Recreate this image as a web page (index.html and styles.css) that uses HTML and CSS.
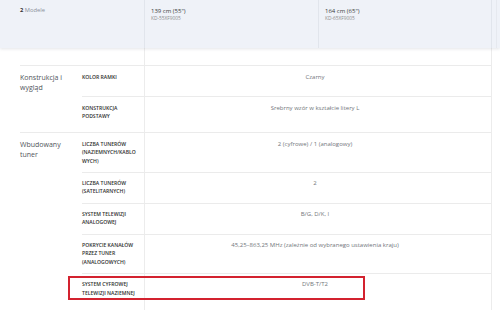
FILE: index.html
```html
<!DOCTYPE html>
<html lang="pl">
<head>
<meta charset="utf-8">
<title>Porównanie modeli</title>
<link rel="stylesheet" href="styles.css">
</head>
<body>
<div class="page">
  <header class="head">
    <div class="hcell first"><span class="count">2</span> Modele</div>
    <div class="hcell">
      <div class="size">139 cm (55")</div>
      <div class="model">KD-55XF9005</div>
    </div>
    <div class="hcell">
      <div class="size">164 cm (65")</div>
      <div class="model">KD-65XF9005</div>
    </div>
    <div class="hcell edge"></div>
  </header>

  <main class="specs">
    <section class="group">
      <div class="sec-title">Konstrukcja i wygląd</div>
      <div class="rows">
        <div class="row">
          <div class="label">KOLOR RAMKI</div>
          <div class="value">Czarny</div>
        </div>
        <div class="row">
          <div class="label">KONSTRUKCJA PODSTAWY</div>
          <div class="value">Srebrny wzór w kształcie litery L</div>
        </div>
      </div>
    </section>

    <section class="group">
      <div class="sec-title">Wbudowany tuner</div>
      <div class="rows">
        <div class="row">
          <div class="label">LICZBA TUNERÓW (NAZIEMNYCH/&#8288;KABLO<wbr>WYCH)</div>
          <div class="value">2 (cyfrowe) / 1 (analogowy)</div>
        </div>
        <div class="row">
          <div class="label">LICZBA TUNERÓW (SATELITARNYCH)</div>
          <div class="value">2</div>
        </div>
        <div class="row">
          <div class="label">SYSTEM TELEWIZJI ANALOGOWEJ</div>
          <div class="value">B/G, D/K, I</div>
        </div>
        <div class="row">
          <div class="label">POKRYCIE KANAŁÓW PRZEZ TUNER (ANALOGOWYCH)</div>
          <div class="value">45,25–863,25 MHz (zależnie od wybranego ustawienia kraju)</div>
        </div>
        <div class="row">
          <div class="label">SYSTEM CYFROWEJ TELEWIZJI NAZIEMNEJ</div>
          <div class="value">DVB-T/T2</div>
        </div>
      </div>
    </section>
  </main>

  <div class="highlight"></div>
</div>
</body>
</html>
```

FILE: styles.css
```css
html, body {
  margin: 0;
  padding: 0;
  background: #ffffff;
}

body {
  font-family: "Open Sans", "Noto Sans", sans-serif;
  width: 500px;
  height: 310px;
  overflow: hidden;
}

.page {
  position: relative;
  width: 500px;
  height: 310px;
  overflow: hidden;
}

/* ---------- header ---------- */
.head {
  display: grid;
  grid-template-columns: 145px 174px 173px 1fr;
  height: 48px;
  background: #eff2f8;
  box-shadow: 0 1px 3px rgba(60, 70, 90, 0.14);
  position: relative;
  z-index: 1;
}

.hcell {
  border-right: 1px solid #e1e5ec;
  padding: 7px 0 0 6px;
}

.hcell.first {
  padding: 6px 0 0 20px;
  font-size: 5.8px;
  line-height: 8px;
  color: #8a8f99;
}

.hcell.edge {
  padding: 0;
  border-right: 1px solid #e6e9ef;
  margin-right: 3px;
}

.count {
  color: #333;
  font-weight: 700;
}

.size {
  font-size: 6px;
  line-height: 8px;
  color: #3a3a3a;
}

.model {
  font-size: 4.8px;
  line-height: 7px;
  color: #8c8c8c;
}

/* ---------- spec table ---------- */
.specs {
  box-sizing: border-box;
  width: 492px;
  height: 262px;
  padding: 17px 0 0 20px;
  border-right: 1px solid #ececec;
  background: linear-gradient(#ececec, #ececec) no-repeat 144px 0 / 1px 100%;
}

.group {
  display: flex;
  border-top: 1px solid #ebebeb;
}

.sec-title {
  box-sizing: border-box;
  width: 62px;
  flex: none;
  padding: 7px 6px 0 0;
  font-size: 7px;
  line-height: 9.6px;
  color: #50555b;
}

.rows {
  flex: 1;
}

.row {
  display: flex;
  min-height: 30px;
}

.row + .row {
  border-top: 1px solid #ebebeb;
}

.label {
  box-sizing: border-box;
  width: 62px;
  flex: none;
  padding: 6.5px 5px 6.5px 0;
  font-size: 5.1px;
  line-height: 8.4px;
  font-weight: 600;
  color: #2e2e2e;
  overflow-wrap: anywhere;
}

.value {
  flex: 1;
  padding: 6.5px 6px 6.5px 1px;
  font-size: 6px;
  line-height: 8.4px;
  color: #72767b;
  text-align: center;
}

.row:last-child .label,
.row:last-child .value {
  padding-bottom: 12px;
}

/* ---------- annotation ---------- */
.highlight {
  position: absolute;
  left: 68px;
  top: 276px;
  width: 297px;
  height: 24px;
  box-sizing: border-box;
  border: 2px solid #d3222f;
}
```
